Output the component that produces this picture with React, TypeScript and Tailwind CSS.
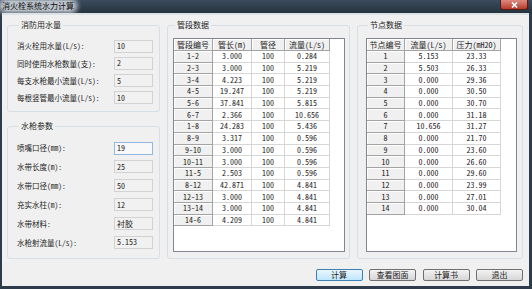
import React from "react";

const pipes: string[][] = [
    ["1-2", "3.000", "100", "0.284"],
    ["2-3", "3.000", "100", "5.219"],
    ["3-4", "4.223", "100", "5.219"],
    ["4-5", "19.247", "100", "5.219"],
    ["5-6", "37.841", "100", "5.815"],
    ["6-7", "2.366", "100", "10.656"],
    ["1-8", "24.283", "100", "5.436"],
    ["8-9", "3.317", "100", "0.596"],
    ["9-10", "3.000", "100", "0.596"],
    ["10-11", "3.000", "100", "0.596"],
    ["11-5", "2.503", "100", "0.596"],
    ["8-12", "42.871", "100", "4.841"],
    ["12-13", "3.000", "100", "4.841"],
    ["13-14", "3.000", "100", "4.841"],
    ["14-6", "4.209", "100", "4.841"],
];

const nodes: string[][] = [
    ["1", "5.153", "23.33"],
    ["2", "5.503", "26.33"],
    ["3", "0.000", "29.36"],
    ["4", "0.000", "30.50"],
    ["5", "0.000", "30.70"],
    ["6", "0.000", "31.18"],
    ["7", "10.656", "31.27"],
    ["8", "0.000", "21.70"],
    ["9", "0.000", "23.60"],
    ["10", "0.000", "26.60"],
    ["11", "0.000", "29.60"],
    ["12", "0.000", "23.99"],
    ["13", "0.000", "27.01"],
    ["14", "0.000", "30.04"],
];

type Field = { label: string; value: string; focused?: boolean };

const water: Field[] = [
    {label: "消火栓用水量(L/s):", value: "10"},
    {label: "同时使用水枪数量(支):", value: "2"},
    {label: "每支水枪最小流量(L/s):", value: "5"},
    {label: "每根竖管最小流量(L/s):", value: "10"},
];

const nozzle: Field[] = [
    {label: "喷嘴口径(mm):", value: "19", focused: true},
    {label: "水带长度(m):", value: "25"},
    {label: "水带口径(mm):", value: "50"},
    {label: "充实水柱(m):", value: "12"},
    {label: "水带材料:", value: "衬胶"},
    {label: "水枪射流量(L/s):", value: "5.153"},
];

const FieldRow = ({field}: { field: Field }) => (
    <div className="flex items-center justify-between h-[13px]">
        <span className="whitespace-nowrap text-[7.5px]">{field.label}</span>
        <div
            className={field.focused
                ? "w-[39px] h-[13px] border border-[#8fb9e3] bg-[#f8f8f8] pl-[2px] flex items-center"
                : "w-[39px] h-[13px] border border-[#d2d2d2] bg-[#f1f1f1] pl-[2px] flex items-center"}>
            {field.value}
        </div>
    </div>
);

const Legend = ({children}: { children: React.ReactNode }) => (
    <legend className="ml-[2px] px-[2px] leading-[10px]">{children}</legend>
);

const Grid = ({widths, head, rows}: { widths: number[]; head: string[]; rows: string[][] }) => (
    <div className="flex flex-col">
        <div className="flex">
            {head.map((h, i) => (
                <div key={i} style={{width: widths[i]}}
                     className="h-[12px] shrink-0 bg-[#f0f0f0] border-r border-b border-[#a3a3a3] shadow-[inset_1px_1px_0_#fff] flex items-center justify-center whitespace-nowrap">
                    {h}
                </div>
            ))}
        </div>
        {rows.map((row, r) => (
            <div className="flex" key={r}>
                {row.map((cell, i) => (
                    <div key={i} style={{width: widths[i]}}
                         className={i === 0
                             ? "h-[11.7px] shrink-0 bg-[#f0f0f0] border-r border-b border-[#a3a3a3] shadow-[inset_1px_1px_0_#fff] flex items-center justify-center"
                             : "h-[11.7px] shrink-0 bg-white border-r border-b border-[#d6d6d6] flex items-center justify-center"}>
                        {cell}
                    </div>
                ))}
            </div>
        ))}
    </div>
);

const Button = ({label, primary}: { label: string; primary?: boolean }) => (
    <div
        className={primary
            ? "w-[47px] h-[12px] rounded-[2px] border border-[#3c7fb1] bg-linear-to-b from-[#eaf6fd] to-[#bee6fd] flex items-center justify-center"
            : "w-[47px] h-[12px] rounded-[2px] border border-[#707070] bg-linear-to-b from-[#f3f3f3] to-[#d6d6d6] flex items-center justify-center"}>
        {label}
    </div>
);

export default function App() {
    return (
        <div
            className="w-[532px] h-[289px] bg-[#2d3b4a] flex flex-col overflow-hidden text-[8px] text-[#1e1e1e] font-['Noto_Sans_Mono_CJK_SC','Noto_Sans_CJK_SC',monospace]">
            {/* title bar */}
            <div className="h-[13px] shrink-0 flex justify-between bg-linear-to-b from-[#3c4c5e] to-[#26333f] pr-[4px]">
                <div className="pl-[1px] pt-[1px]">
                    <span
                        className="block px-[1px] leading-[10px] text-[#111] rounded-[5px] bg-[rgba(208,214,221,0.85)] shadow-[0_0_4px_3px_rgba(208,214,221,0.75)]">消火栓系统水力计算</span>
                </div>
                <div
                    className="w-[28px] h-[10px] rounded-b-[3px] border border-t-0 border-[#5a1a14] bg-linear-to-b from-[#dc8a7f] to-[#b8392b] flex items-center justify-center">
                    <svg width="7" height="6" viewBox="0 0 7 6">
                        <path d="M1 0.5 L6 5.5 M6 0.5 L1 5.5" stroke="#fff" strokeWidth="1.6"/>
                    </svg>
                </div>
            </div>

            {/* client */}
            <div className="flex-1 ml-[2px] mr-[3px] mb-[3px] bg-[#f0f0f0] border-t-[2px] border-[#dde2e7] flex flex-col pt-[5px] pl-[5px] pr-[6px]">
                <div className="flex gap-[7px] h-[239px]">
                    <div className="w-[153px] flex flex-col gap-[9px]">
                        <fieldset className="h-[92px] border border-[#d5dfe5] rounded-[3px] pl-[9px] pr-[6px] pt-[9.5px] flex flex-col gap-[4.3px]">
                            <Legend>消防用水量</Legend>
                            {water.map((f, i) => <FieldRow field={f} key={i}/>)}
                        </fieldset>
                        <fieldset className="flex-1 border border-[#d5dfe5] rounded-[3px] pl-[9px] pr-[6px] pt-[10.5px] flex flex-col gap-[5.9px]">
                            <Legend>水枪参数</Legend>
                            {nozzle.map((f, i) => <FieldRow field={f} key={i}/>)}
                        </fieldset>
                    </div>

                    <fieldset className="w-[183px] border border-[#d5dfe5] rounded-[3px] pl-[5px] pr-[4px] pt-[8px]">
                        <Legend>管段数据</Legend>
                        <div className="h-[214px] border border-[#828790] bg-white overflow-hidden">
                            <Grid widths={[39, 39, 33, 45]} head={["管段编号", "管长(m)", "管径", "流量(L/s)"]} rows={pipes}/>
                        </div>
                    </fieldset>

                    <fieldset className="w-[166px] border border-[#d5dfe5] rounded-[3px] pl-[8px] pr-[5px] pt-[8px]">
                        <Legend>节点数据</Legend>
                        <div className="h-[214px] border border-[#828790] bg-white overflow-hidden">
                            <Grid widths={[38, 48, 48]} head={["节点编号", "流量(L/s)", "压力(mH2O)"]} rows={nodes}/>
                        </div>
                    </fieldset>
                </div>

                <div className="flex justify-end gap-[6.5px] mt-[10px]">
                    <Button label="计算" primary/>
                    <Button label="查看图面"/>
                    <Button label="计算书"/>
                    <Button label="退出"/>
                </div>
            </div>
        </div>
    );
}
